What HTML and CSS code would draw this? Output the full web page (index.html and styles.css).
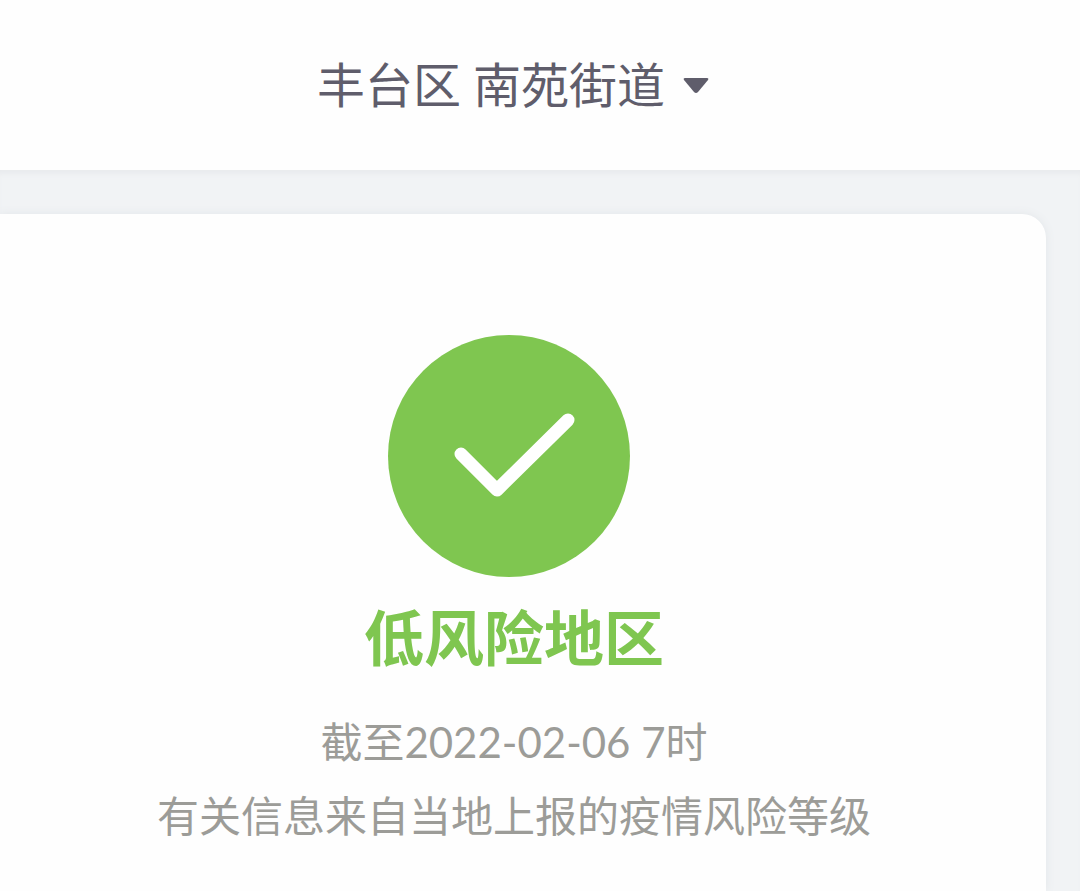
FILE: index.html
```html
<!DOCTYPE html>
<html lang="zh-CN">
<head>
<meta charset="utf-8">
<meta name="viewport" content="width=device-width, initial-scale=1">
<title>风险等级查询</title>
<link rel="stylesheet" href="styles.css">
</head>
<body>
<header class="topbar">
  <button class="region" type="button" aria-haspopup="listbox">
    <span>丰台区 南苑街道</span>
    <svg class="caret" viewBox="0 0 26 18" aria-hidden="true"><path d="M2 1H24Q26 1 25 3L15 15Q13 17 11 15L1 3Q0 1 2 1Z"/></svg>
  </button>
</header>
<main class="content">
  <section class="card">
    <svg class="badge" viewBox="0 0 242 242" aria-hidden="true">
      <circle cx="121" cy="121" r="121"/>
      <path d="M73 119L109 155L180 85"/>
    </svg>
    <div class="summary">
      <h1 class="level">低风险地区</h1>
      <p class="note">截至<time datetime="2022-02-06T07:00">2022-02-06 7时</time></p>
      <p class="note">有关信息来自当地上报的疫情风险等级</p>
    </div>
  </section>
</main>
</body>
</html>
```
FILE: styles.css
```css
* { box-sizing: border-box; }
body {
  margin: 0;
  min-height: 100vh;
  display: flex;
  flex-direction: column;
  background: #f1f3f5;
  font-family: Roboto, "Noto Sans CJK SC", sans-serif;
}
.topbar {
  display: flex;
  justify-content: center;
  padding: 51px 54px 47px 0;
  background: #fefefe;
}
.region {
  display: flex;
  align-items: center;
  gap: 18px;
  padding: 0;
  border: 0;
  background: none;
  color: #5f5d6b;
  font: inherit;
  font-size: 48px;
  line-height: 72px;
}
.caret { width: 26px; height: 18px; margin-bottom: 2px; fill: currentColor; }
.content {
  flex: 1;
  display: flex;
  padding: 44px 34px 0 0;
  box-shadow: inset 0 6px 4px -2px #e9ebee;
}
.card {
  flex: 1;
  display: flex;
  flex-direction: column;
  align-items: center;
  padding: 121px 28px 0 0;
  border-radius: 0 24px 0 0;
  background: #fefefe;
  box-shadow: 0 0 10px #e2e6e9;
}
.badge { width: 242px; height: 242px; fill: #7fc650; }
.badge path {
  fill: none;
  stroke: #fff;
  stroke-width: 13;
  stroke-linecap: round;
  stroke-linejoin: round;
}
.summary {
  padding: 22px 0 0 10px;
  text-align: center;
}
.level {
  margin: 0 0 22px;
  color: #7fc650;
  font-size: 60px;
  line-height: 84px;
  font-weight: 700;
}
.note {
  margin: 0;
  color: #9c9c98;
  font-family: Lato, "Noto Sans CJK SC", sans-serif;
  font-size: 42px;
  line-height: 74px;
}
```
